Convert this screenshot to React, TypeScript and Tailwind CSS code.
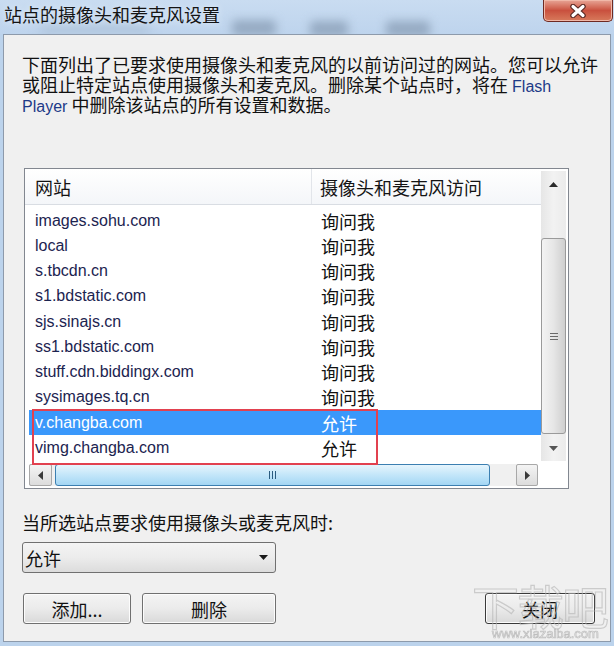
import React from 'react';

const rows: [string, string][] = [
  ['images.sohu.com', '询问我'],
  ['local', '询问我'],
  ['s.tbcdn.cn', '询问我'],
  ['s1.bdstatic.com', '询问我'],
  ['sjs.sinajs.cn', '询问我'],
  ['ss1.bdstatic.com', '询问我'],
  ['stuff.cdn.biddingx.com', '询问我'],
  ['sysimages.tq.cn', '询问我'],
  ['v.changba.com', '允许'],
  ['vimg.changba.com', '允许'],
];

const cjk = "font-['Noto_Sans_CJK_SC',sans-serif]";
const latin = "font-['Liberation_Sans','Noto_Sans_CJK_SC',sans-serif]";

const Tri: React.FC<{ dir: 'up' | 'down' | 'left' | 'right'; color?: string }> = ({ dir, color = '#1a1a1a' }) => {
  const pts = {
    up: '0,5 4.5,0 9,5',
    down: '0,0 9,0 4.5,5',
    left: '5,0 5,9 0,4.5',
    right: '0,0 0,9 5,4.5',
  }[dir];
  const vertical = dir === 'up' || dir === 'down';
  return (
    <svg width={vertical ? 9 : 5} height={vertical ? 5 : 9} viewBox={vertical ? '0 0 9 5' : '0 0 5 9'}>
      <polygon points={pts} fill={color} />
    </svg>
  );
};

const WinButton: React.FC<{ label: string; className?: string; dark?: boolean }> = ({ label, className = '', dark }) => (
  <button
    type="button"
    className={`h-[31px] rounded-[3px] border ${dark ? 'border-[#3a3a3a]' : 'border-[#707070]'} bg-gradient-to-b from-[#f4f4f4] via-[#ebebeb] to-[#d9d9d9] text-[18px] leading-[20px] text-[#111] ${cjk} shadow-[inset_0_0_0_1px_#fcfcfc] ${className}`}
  >
    {label}
  </button>
);

export default function App() {
  return (
    <div className={`relative flex h-[646px] w-[614px] flex-col overflow-hidden bg-[#bcd3ec] ${latin} text-black`}>
      {/* title bar */}
      <div className="relative h-[34px] shrink-0 overflow-hidden bg-gradient-to-b from-[#c9dcf1] to-[#bed4ed]">
        <div className="absolute left-[232px] top-[20px] h-[16px] w-[44px] rounded-sm bg-[#96abc3] blur-[5px]" />
        <div className="absolute left-[310px] top-[21px] h-[16px] w-[38px] rounded-sm bg-[#96abc3] blur-[5px]" />
        <div className="absolute left-[386px] top-[21px] h-[16px] w-[44px] rounded-sm bg-[#96abc3] blur-[5px]" />
        <div className="absolute left-[40px] top-[24px] h-[10px] w-[110px] rounded-sm bg-[#aec3da] blur-[6px]" />
        <div className={`absolute left-[4px] top-[3px] text-[18px] leading-[22px] text-[#141414] ${cjk} [text-shadow:0_0_6px_#eaf2fb]`}>
          站点的摄像头和麦克风设置
        </div>
        <div className="absolute left-[543px] top-0 flex h-[22px] w-[70px] items-center justify-center rounded-b-[5px] border border-t-0 border-[#6e2a22] bg-gradient-to-b from-[#e7a596] via-[#c9503e] to-[#d77a5c] shadow-[inset_0_0_0_1px_#f0b8a8]">
          <svg width="18" height="14" viewBox="0 0 18 14">
            <path d="M4 2.5 L14 11.5 M14 2.5 L4 11.5" stroke="#5a2a24" strokeWidth="5.5" strokeLinecap="round" />
            <path d="M4 2.5 L14 11.5 M14 2.5 L4 11.5" stroke="#ffffff" strokeWidth="3.2" strokeLinecap="round" />
          </svg>
        </div>
      </div>

      {/* dialog body */}
      <div className="mx-[3px] mb-[4px] flex flex-1 flex-col border border-[#8d9aab] bg-[#f0f0f0]">
        <div className={`ml-[18px] mt-[19px] text-[18px] text-[#111] ${cjk}`}>
          <div className="h-[20px] leading-[20px]">下面列出了已要求使用摄像头和麦克风的以前访问过的网站。您可以允许</div>
          <div className="h-[20px] leading-[20px]">
            或阻止特定站点使用摄像头和麦克风。删除某个站点时，将在{' '}
            <span className={`text-[16px] leading-none text-[#1d3a88] ${latin}`}>Flash</span>
          </div>
          <div className="h-[20px] leading-[20px]">
            <span className={`text-[16px] leading-none text-[#1d3a88] ${latin}`}>Player</span> 中删除该站点的所有设置和数据。
          </div>
        </div>

        {/* list box */}
        <div className="ml-[20px] mt-[54px] flex h-[321px] w-[545px] shrink-0 border border-[#828790] bg-white">
          <div className="flex w-[516px] flex-col">
            <div className={`flex h-[36px] shrink-0 border-b border-[#d9dde3] bg-gradient-to-b from-white to-[#f4f6f9] text-[18px] leading-[20px] text-[#141414] ${cjk}`}>
              <div className="flex w-[287px] items-center border-r border-[#e2e5ea] pl-[10px]">网站</div>
              <div className="flex flex-1 items-center pl-[8px]">摄像头和麦克风访问</div>
            </div>
            <div className="relative mt-[3px] h-[256px] shrink-0 pl-[4px]">
              {rows.map(([site, access], i) => {
                const sel = i === 8;
                return (
                  <div key={site} className={`flex h-[25.25px] items-center ${sel ? 'bg-[#3a98fb] text-white' : ''}`}>
                    <div className={`w-[292px] pl-[6px] text-[16px] leading-[20px] ${sel ? 'text-white' : 'text-[#1c2450]'} ${latin}`}>{site}</div>
                    <div className={`text-[18px] leading-[20px] ${sel ? 'text-white' : 'text-[#111]'} ${cjk}`}>{access}</div>
                  </div>
                );
              })}
              <div className="pointer-events-none absolute left-[7px] top-[201px] h-[56px] w-[346px] border-2 border-[#e2414f]" />
            </div>
            {/* horizontal scrollbar */}
            <div className="ml-[4px] mr-[3px] flex h-[22px] shrink-0 items-stretch bg-[#f0f0f0]">
              <div className="flex w-[23px] items-center justify-center rounded-[2px] border border-[#a8a8a8] bg-gradient-to-b from-[#f4f4f4] to-[#dcdcdc]">
                <Tri dir="left" color="#3a3a3a" />
              </div>
              <div className="ml-[3px] flex w-[435px] items-center justify-center rounded-[3px] border border-[#3c7fb1] bg-gradient-to-b from-[#e6f5fd] via-[#c3e6f9] to-[#a3d6f4]">
                <div className="flex gap-[2px]">
                  <div className="h-[8px] w-px bg-[#2b5c80]" />
                  <div className="h-[8px] w-px bg-[#2b5c80]" />
                  <div className="h-[8px] w-px bg-[#2b5c80]" />
                </div>
              </div>
              <div className="flex-1" />
              <div className="flex w-[22px] items-center justify-center rounded-[2px] border border-[#a8a8a8] bg-gradient-to-b from-[#f4f4f4] to-[#dcdcdc]">
                <Tri dir="right" color="#3a3a3a" />
              </div>
            </div>
          </div>
          {/* vertical scrollbar */}
          <div className="w-[27px] pr-[2px] pt-[2px]">
            <div className="flex h-[290px] w-[25px] flex-col bg-gradient-to-r from-[#e6e6e6] via-[#f2f2f2] to-[#ebebeb]">
              <div className="flex h-[26px] items-center justify-center">
                <Tri dir="up" color="#2a2a2a" />
              </div>
              <div className="h-[41px]" />
              <div className="flex h-[196px] flex-col items-center justify-center gap-[2px] rounded-[3px] border border-[#9a9a9a] bg-gradient-to-r from-[#f3f3f3] via-[#e6e6e6] to-[#cfcfcf]">
                <div className="h-px w-[8px] bg-[#6a6a6a]" />
                <div className="h-px w-[8px] bg-[#6a6a6a]" />
                <div className="h-px w-[8px] bg-[#6a6a6a]" />
              </div>
              <div className="flex-1" />
              <div className="flex h-[25px] items-center justify-center">
                <Tri dir="down" color="#555555" />
              </div>
            </div>
          </div>
        </div>

        <div className={`ml-[18px] mt-[23px] h-[20px] text-[18px] leading-[20px] text-[#111] ${cjk}`}>
          当所选站点要求使用摄像头或麦克风时:
        </div>

        <div className="ml-[18px] mt-[10px] flex h-[31px] w-[254px] shrink-0 items-center justify-between rounded-[3px] border border-[#707070] bg-gradient-to-b from-[#f4f4f4] via-[#ececec] to-[#dcdcdc] pl-[2px] pr-[7px]">
          <span className={`text-[18px] leading-[20px] text-[#111] ${cjk}`}>允许</span>
          <Tri dir="down" />
        </div>

        <div className="mt-[20px] flex">
          <WinButton label="添加..." className="ml-[19px] w-[108px]" />
          <WinButton label="删除" className="ml-[11px] w-[134px]" />
          <WinButton label="关闭" className="ml-auto mr-[15px] w-[110px]" dark />
        </div>
      </div>

      {/* watermark */}
      <div className={`pointer-events-none absolute left-[472px] top-[580px] text-[47px] leading-[50px] tracking-[-2px] text-transparent opacity-60 [-webkit-text-stroke:1.2px_#b4b4b4] ${cjk}`}>
        下载吧
      </div>
      <div className={`pointer-events-none absolute left-[492px] top-[627px] text-[13px] leading-[14px] text-transparent opacity-70 [-webkit-text-stroke:0.7px_#a8a8a8] ${latin}`}>
        www.xiazaiba.com
      </div>
    </div>
  );
}
